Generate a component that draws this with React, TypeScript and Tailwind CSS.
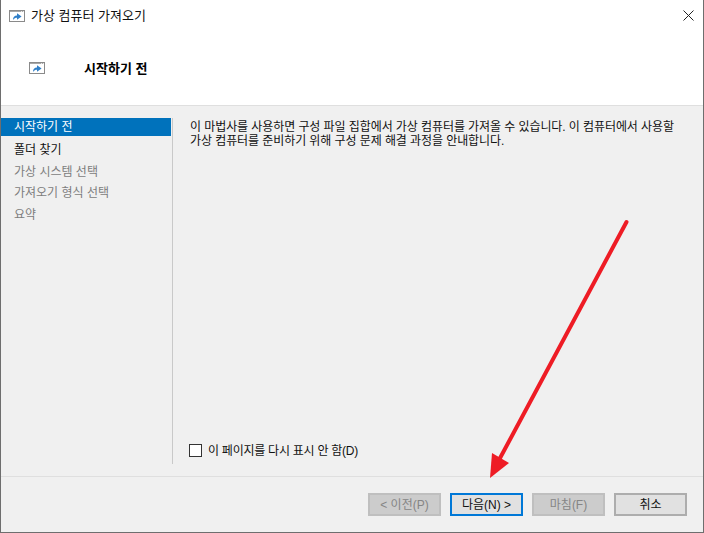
const KR = "font-['Liberation_Sans','Noto_Sans_CJK_KR',sans-serif]";

function WinIcon() {
  return (
    <svg width="16" height="12" viewBox="0 0 16 12" className="block shrink-0">
      <rect x="0.5" y="0.5" width="15" height="11" fill="#ffffff" stroke="#8a8a8a" />
      <rect x="1" y="1" width="14" height="1" fill="#a8a8a8" />
      <rect x="12" y="1" width="1" height="1" fill="#e8e8e8" />
      <rect x="14" y="1" width="1" height="1" fill="#e8e8e8" />
      <path d="M4 10 C4 7 5.4 5.4 8 5.4 V3.2 L12.6 6.6 L8 9.8 V7.8 C6.4 7.8 5.2 8.4 4 10 Z" fill="#2f7fc8" />
    </svg>
  );
}

function Btn({ label, state }: { label: string; state: "off" | "primary" | "normal" }) {
  const cls =
    state === "off"
      ? "bg-[#cccccc] border-2 border-[#bfbfbf] text-[#858585]"
      : state === "primary"
        ? "bg-[#e1e1e1] border-2 border-[#0078d7] text-[#111111]"
        : "bg-[#e1e1e1] border-2 border-[#adadad] text-[#111111]";
  return (
    <div className={`w-[73px] h-[23px] flex items-center justify-center text-[12px] leading-none ${cls}`}>
      {label}
    </div>
  );
}

export default function App() {
  return (
    <div className={`${KR} relative w-[704px] h-[533px] overflow-hidden flex flex-col bg-[#f0f0f0] border-x border-b border-[#6e6e6e] text-[#111111]`}>
      <div className="h-[106px] shrink-0 bg-white flex flex-col border-b border-[#dfdfdf]">
        <div className="h-[31px] flex items-center pl-[8px] gap-[6px]">
          <WinIcon />
          <span className="text-[13px] leading-none">가상 컴퓨터 가져오기</span>
          <svg width="11" height="11" viewBox="0 0 11 11" className="ml-auto mr-[9px]">
            <path d="M0.5 0.5 L10.5 10.5 M10.5 0.5 L0.5 10.5" stroke="#222222" strokeWidth="1" />
          </svg>
        </div>
        <div className="flex items-center pl-[28px] mt-[25px] h-[24px]">
          <WinIcon />
          <span className="ml-[39px] text-[13px] font-bold leading-none text-black">시작하기 전</span>
        </div>
      </div>

      <div className="h-[371px] shrink-0 flex pt-[12px] border-b border-[#dfdfdf]">
        <div className="w-[172px] h-[346px] shrink-0 border-r border-[#c9c9c9] text-[12px] leading-none">
          <div className="h-[18px] w-[170px] bg-[#0072bc] text-white flex items-center pl-[13px]">시작하기 전</div>
          <div className="h-[22px] mt-[3px] flex items-center pl-[13px] text-[#111111]">폴더 찾기</div>
          <div className="h-[22px] flex items-center pl-[13px] text-[#7d7d7d]">가상 시스템 선택</div>
          <div className="h-[22px] mt-[-1px] flex items-center pl-[13px] text-[#7d7d7d]">가져오기 형식 선택</div>
          <div className="h-[22px] flex items-center pl-[13px] text-[#7d7d7d]">요약</div>
        </div>
        <div className="flex-1 h-[346px] pl-[17px] flex flex-col">
          <p className="text-[12px] leading-[14px] mt-[2px] whitespace-nowrap tracking-[-0.08px]">
            이 마법사를 사용하면 구성 파일 집합에서 가상 컴퓨터를 가져올 수 있습니다. 이 컴퓨터에서 사용할
            <br />
            가상 컴퓨터를 준비하기 위해 구성 문제 해결 과정을 안내합니다.
          </p>
          <div className="mt-auto flex items-center gap-[6px] mb-[7px] ml-[-1px]">
            <div className="w-[13px] h-[13px] bg-white border border-[#333333]" />
            <span className="text-[12px] leading-none tracking-[-0.25px]">이 페이지를 다시 표시 안 함(D)</span>
          </div>
        </div>
      </div>

      <div className="flex-1 flex items-start justify-end gap-[9px] pt-[16px] pr-[16px]">
        <Btn label="< 이전(P)" state="off" />
        <Btn label="다음(N) >" state="primary" />
        <Btn label="마침(F)" state="off" />
        <Btn label="취소" state="normal" />
      </div>

      <svg width="704" height="533" viewBox="0 0 704 533" className="absolute left-[-1px] top-0 pointer-events-none">
        <path d="M626.5 222 L499 460" stroke="#ee1c25" strokeWidth="4" strokeLinecap="round" fill="none" />
        <path d="M490 478 L492 453 L509 463 Z" fill="#ee1c25" />
      </svg>
    </div>
  );
}
